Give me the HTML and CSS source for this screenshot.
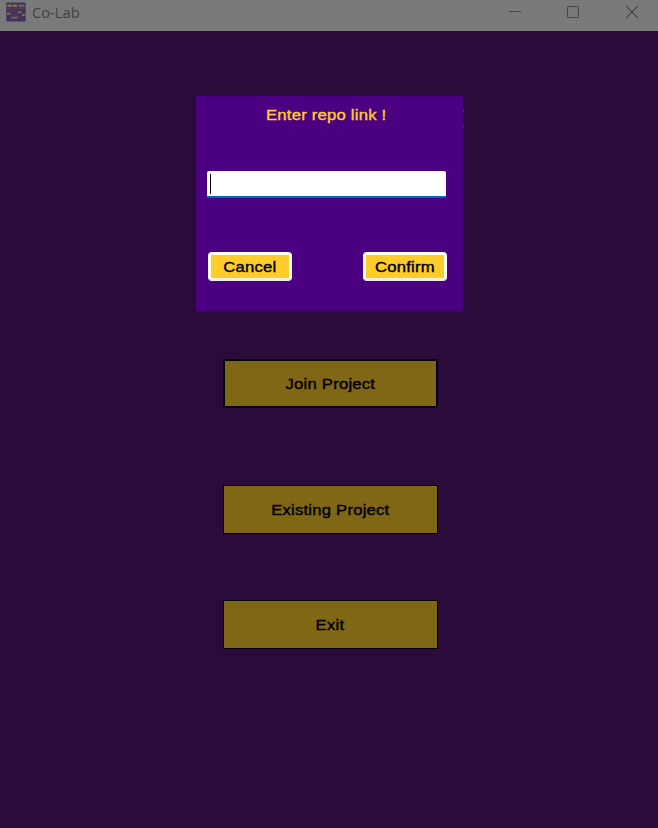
FILE: index.html
```html
<!DOCTYPE html>
<html lang="en">
<head>
<meta charset="utf-8">
<title>Co-Lab</title>
<link rel="stylesheet" href="styles.css">
</head>
<body>
<header class="titlebar">
  <svg class="logo" viewBox="0 0 20 20"><rect x=".3" y=".5" width="19.4" height="19" rx="1" fill="#43325c"/><path d="M1 6.2h18M2 8.5h8M6 12h6" stroke="#534160" stroke-width=".7"/><path d="M1.5 3.7h4.7M7 3.7h4" stroke="#85763f" stroke-width="2.6"/><path d="M12.5 3.7h6" stroke="#75694e" stroke-width="2.2"/><path d="M1 11.8h3.7M5 15.6h7M12 10.2h3.3M16 13h3.4" stroke="#7c6c46" stroke-width="1.9"/></svg>
  <span class="name">Co-Lab</span>
  <svg class="controls" viewBox="0 0 130 14" fill="none" stroke="#484848" stroke-width="1.1"><path d="M1 6.5h12M118 1l12 12M130 1l-12 12"/><rect x="59.5" y="1.5" width="11" height="11" rx="1"/></svg>
</header>
<main class="window">
  <section class="dialog">
    <h1 class="heading"><span class="label">Enter repo link !</span></h1>
    <div class="field"><span class="caret"></span></div>
    <div class="actions">
      <button class="small"><span class="label">Cancel</span></button>
      <button class="small"><span class="label">Confirm</span></button>
    </div>
    <span class="edge"></span>
  </section>
  <nav class="menu">
    <button class="item focused"><span class="label">Join Project</span></button>
    <button class="item existing"><span class="label">Existing Project</span></button>
    <button class="item exit"><span class="label">Exit</span></button>
  </nav>
</main>
</body>
</html>
```
FILE: styles.css
```css
* { box-sizing: border-box; }
body { margin: 0; width: 658px; height: 828px; overflow: hidden; background: #2a0b3a; }
.titlebar { height: 31px; background: #7a7a7a; display: flex; align-items: flex-start; padding: 2px 20px 0 6px; }
.logo { width: 20px; height: 20px; }
.name { margin-left: 6px; font: 14.7px/20px "Open Sans", sans-serif; color: #424242; }
.controls { width: 130px; height: 14px; margin: 3px 0 0 auto; }
.window { display: flex; flex-direction: column; }
.dialog { position: relative; margin: 65px 0 0 196px; width: 267px; height: 215px; background: #4b0082; padding: 10px 17px 0 11px; }
.heading, button { font: 400 15px/18px "Liberation Sans", sans-serif; -webkit-text-stroke: .4px; letter-spacing: .2px; white-space: nowrap; }
.label { display: inline-block; margin-right: 1px; transform: scaleX(1.11); }
.heading { margin: 0; height: 65px; text-align: center; color: #ffce2b; }
.field { width: 239px; height: 27px; background: #fff; border-bottom: 2px solid #0067c0; border-radius: 2px 2px 0 0; padding: 3px; }
.caret { display: block; width: 1px; height: 20px; background: #000; }
.actions { display: flex; justify-content: space-between; width: 239px; margin: 54px 0 0 1px; }
button { padding: 0; color: #000; }
.small { width: 84px; height: 29px; border: 3px solid #fff; border-bottom-color: #eee; border-radius: 4px; background: #ffcc29; }
.edge { position: absolute; left: 267px; top: 13px; width: 1px; height: 18px; border: solid #741f3a; border-width: 3px 0 2px; }
.menu { margin: 48px 0 0 223px; width: 215px; display: flex; flex-direction: column; }
.item { height: 49px; border: 1px solid #000; background: #806716; }
.focused { border-width: 2px; }
.existing { margin-top: 77px; }
.exit { margin-top: 66px; }
```
